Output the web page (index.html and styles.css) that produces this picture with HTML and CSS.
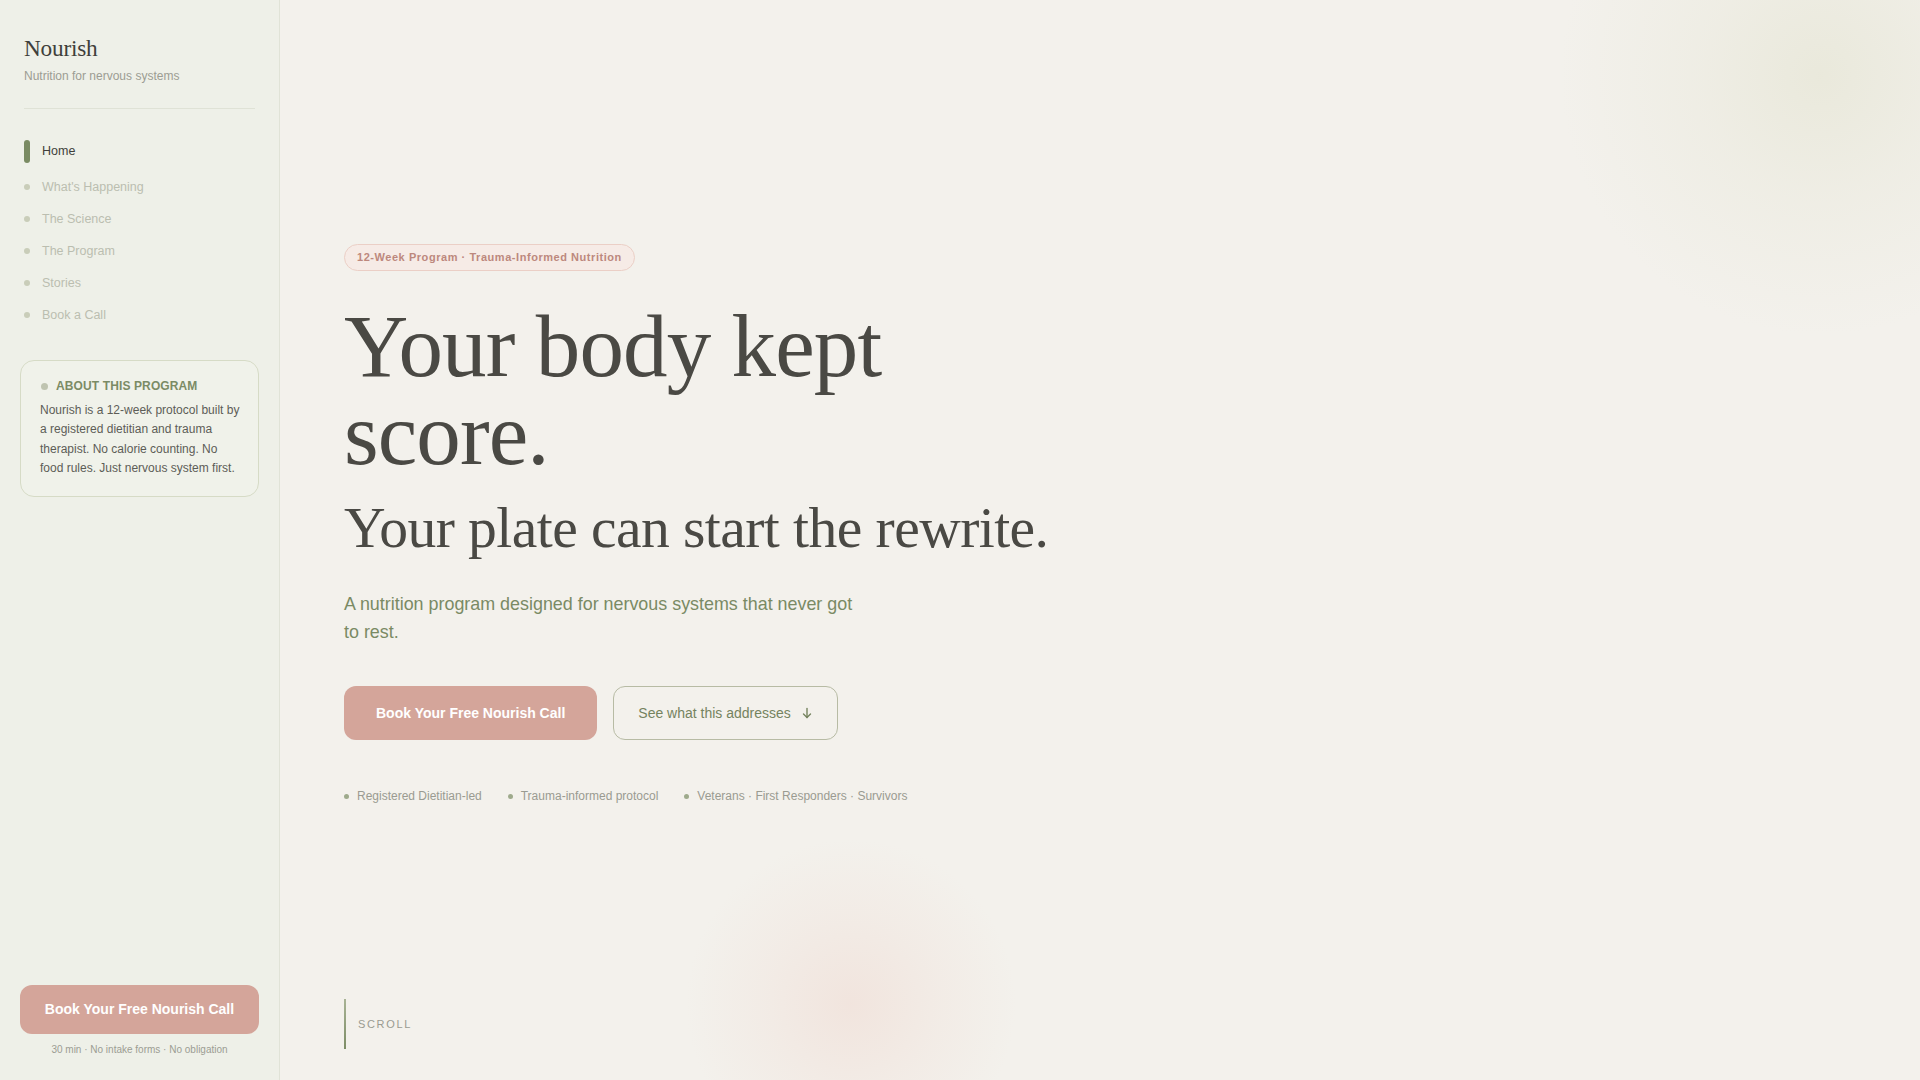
FILE: index.html
```html
<!DOCTYPE html>
<html lang="en">
<head>
<meta charset="utf-8">
<title>Nourish</title>
<link rel="stylesheet" href="styles.css">
</head>
<body>
<div class="layout">
  <aside class="sidebar">
    <div class="brand">
      <div class="logo">Nourish</div>
      <div class="tagline">Nutrition for nervous systems</div>
    </div>
    <nav class="nav">
      <a class="nav-item active"><span class="marker"></span>Home</a>
      <a class="nav-item"><span class="marker"></span>What's Happening</a>
      <a class="nav-item"><span class="marker"></span>The Science</a>
      <a class="nav-item"><span class="marker"></span>The Program</a>
      <a class="nav-item"><span class="marker"></span>Stories</a>
      <a class="nav-item"><span class="marker"></span>Book a Call</a>
    </nav>
    <div class="about">
      <div class="about-title"><span class="about-dot"></span>ABOUT THIS PROGRAM</div>
      <p class="about-text">Nourish is a 12-week protocol built by a registered dietitian and trauma therapist. No calorie counting. No food rules. Just nervous system first.</p>
    </div>
    <div class="side-cta">
      <a class="side-btn">Book Your Free Nourish Call</a>
      <div class="side-note">30 min · No intake forms · No obligation</div>
    </div>
  </aside>
  <main class="main">
    <section class="hero">
      <div class="badge">12-Week Program · Trauma-Informed Nutrition</div>
      <h1 class="headline">Your body kept<br>score.</h1>
      <h2 class="subhead">Your plate can start the rewrite.</h2>
      <p class="lead">A nutrition program designed for nervous systems that never got to rest.</p>
      <div class="actions">
        <a class="btn btn-primary">Book Your Free Nourish Call</a>
        <a class="btn btn-ghost">See what this addresses
          <svg class="arrow" width="12" height="12" viewBox="0 0 12 12" fill="none" stroke="currentColor" stroke-width="1.4" stroke-linecap="round" stroke-linejoin="round"><path d="M6 1.5v9"/><path d="M2.5 7l3.5 3.5L9.5 7"/></svg>
        </a>
      </div>
      <ul class="trust">
        <li><span class="tdot"></span>Registered Dietitian-led</li>
        <li><span class="tdot"></span>Trauma-informed protocol</li>
        <li><span class="tdot"></span>Veterans · First Responders · Survivors</li>
      </ul>
    </section>
    <div class="scroll">
      <span class="scroll-line"></span>
      <span class="scroll-label">SCROLL</span>
    </div>
  </main>
</div>
</body>
</html>
```
FILE: styles.css
```css
* { box-sizing: border-box; }
html, body { margin: 0; padding: 0; }
body {
  font-family: "Liberation Sans", Arial, sans-serif;
  background: #f3f1ec;
  color: #45443f;
}
a { text-decoration: none; color: inherit; }

.layout {
  display: flex;
  height: 1080px;
  width: 1920px;
  overflow: hidden;
}

/* Sidebar */
.sidebar {
  width: 280px;
  flex: 0 0 280px;
  background: #eef0e8;
  border-right: 1px solid #e0e3d7;
  display: flex;
  flex-direction: column;
  padding: 34px 0 23px;
}
.brand {
  margin: 0 24px;
  padding-bottom: 24px;
  border-bottom: 1px solid #dfe2d6;
}
.logo {
  font-family: "Liberation Serif", "Times New Roman", serif;
  font-size: 23.3px;
  line-height: 28px;
  color: #3f3f3b;
  letter-spacing: -0.01em;
}
.tagline {
  margin-top: 6px;
  font-size: 12px;
  line-height: 16px;
  color: #9c9d93;
}
.nav {
  display: flex;
  flex-direction: column;
  margin: 26px 24px 0;
}
.nav-item {
  display: flex;
  align-items: center;
  gap: 12px;
  height: 32px;
  font-size: 12.5px;
  color: #bbbeb0;
}
.nav-item.active {
  color: #3f3f3b;
  height: 36px;
  margin-top: -2px;
  margin-bottom: 2px;
}
.marker {
  width: 6px;
  height: 6px;
  border-radius: 50%;
  background: #c9cdb9;
  flex: 0 0 6px;
}
.nav-item.active .marker {
  height: 23px;
  border-radius: 3px;
  background: #7a8b63;
}

.about {
  margin: 29px 20px 0;
  border: 1px solid #d6dbc6;
  border-radius: 14px;
  background: #f0f2ea;
  padding: 17px 18px 17px 19px;
}
.about-title {
  display: flex;
  align-items: center;
  gap: 8px;
  font-size: 12px;
  line-height: 16px;
  font-weight: 700;
  color: #7b8b65;
  letter-spacing: 0.01em;
}
.about-dot {
  width: 7px;
  height: 7px;
  border-radius: 50%;
  background: #bfc4b0;
  margin-left: 1px;
}
.about-text {
  margin: 7px 0 0;
  font-size: 12px;
  line-height: 19.4px;
  color: #5d5d57;
}

.side-cta {
  margin-top: auto;
  padding: 0 20px;
  display: flex;
  flex-direction: column;
  align-items: stretch;
}
.side-btn {
  display: block;
  height: 49px;
  line-height: 49px;
  border-radius: 12px;
  background: #d4a59a;
  color: #fff;
  font-weight: 700;
  font-size: 14px;
  text-align: center;
}
.side-note {
  margin-top: 9px;
  text-align: center;
  font-size: 10px;
  line-height: 14px;
  color: #9c9d93;
}

/* Main */
.main {
  flex: 1;
  display: flex;
  flex-direction: column;
  padding: 244px 64px 31px;
  background:
    radial-gradient(circle at 1540px 75px, rgba(226, 226, 206, 0.55) 0, rgba(226, 226, 206, 0.25) 120px, rgba(243, 241, 236, 0) 260px),
    radial-gradient(circle at 571px 1004px, rgba(240, 220, 212, 0.6) 0, rgba(240, 220, 212, 0.25) 90px, rgba(243, 241, 236, 0) 165px),
    #f3f1ec;
}
.hero {
  display: flex;
  flex-direction: column;
  align-items: flex-start;
}
.badge {
  height: 27px;
  line-height: 25px;
  padding: 0 12px;
  border: 1px solid #ebcfc6;
  background: #f6ebe6;
  border-radius: 999px;
  font-size: 11px;
  font-weight: 700;
  color: #bd887d;
  letter-spacing: 0.05em;
}
.headline {
  margin: 31px 0 0;
  font-family: "Liberation Serif", "Times New Roman", serif;
  font-weight: 400;
  font-size: 89px;
  line-height: 88px;
  letter-spacing: -0.01em;
  color: #4a4944;
}
.subhead {
  margin: 18px 0 0;
  font-family: "Liberation Serif", "Times New Roman", serif;
  font-weight: 400;
  font-size: 57.6px;
  line-height: 63px;
  letter-spacing: -0.01em;
  color: #4a4944;
}
.lead {
  margin: 31px 0 0;
  max-width: 522px;
  font-size: 17.9px;
  line-height: 28px;
  color: #7a8a64;
}
.actions {
  display: flex;
  gap: 16px;
  margin-top: 40px;
}
.btn {
  display: inline-flex;
  align-items: center;
  font-size: 14px;
  line-height: 20px;
  border-radius: 12px;
}
.btn-primary {
  padding: 16px 32px;
  background: #d4a59a;
  color: #fff;
  font-weight: 700;
}
.btn-ghost {
  padding: 16px 24px;
  border: 1px solid #b7bba4;
  color: #75835f;
  gap: 10px;
}
.arrow { display: block; }

.trust {
  list-style: none;
  margin: 47px 0 0;
  padding: 0;
  display: flex;
  gap: 26px;
}
.trust li {
  display: flex;
  align-items: center;
  gap: 8px;
  font-size: 12px;
  line-height: 18px;
  color: #9a9b91;
}
.tdot {
  width: 5px;
  height: 5px;
  border-radius: 50%;
  background: #9eaa8c;
}

.scroll {
  margin-top: auto;
  display: flex;
  align-items: center;
  gap: 12px;
  height: 50px;
}
.scroll-line {
  width: 2px;
  height: 50px;
  background: linear-gradient(to bottom, #a8b395, #7d8d66);
}
.scroll-label {
  font-size: 11px;
  letter-spacing: 0.15em;
  color: #9a9b91;
}
```
